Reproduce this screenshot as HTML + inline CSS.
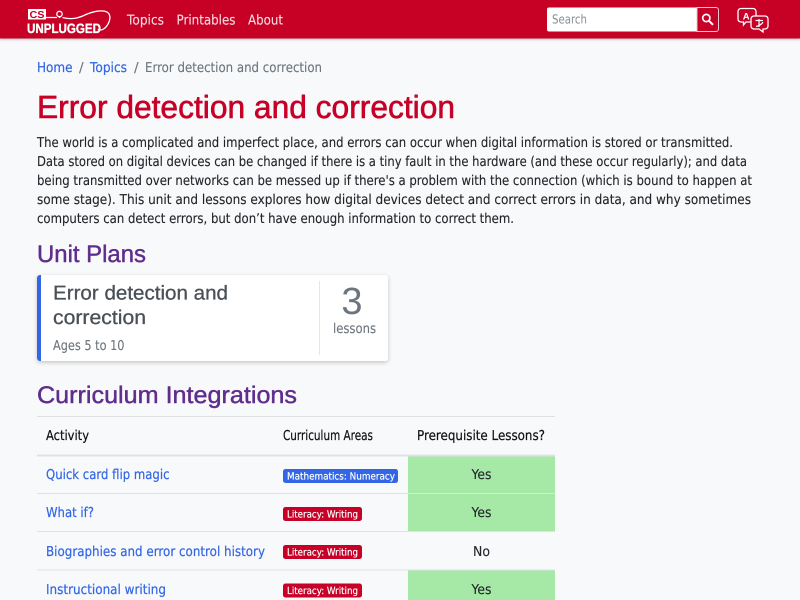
<!DOCTYPE html>
<html lang="en">
<head>
<meta charset="utf-8">
<title>Error detection and correction</title>
<style>
html,body{margin:0;padding:0;width:800px;height:600px;overflow:hidden;background:#f8f9fa}
svg{display:block;position:absolute;left:0;top:0}
text{text-rendering:geometricPrecision}
.b{font-family:"DejaVu Sans","Liberation Sans",sans-serif;font-size:13.6px;fill:#212529;stroke:#212529;stroke-width:.12}
.h{font-family:"Liberation Sans",sans-serif;stroke-linejoin:round}
.l{fill:#3366e6;stroke:#3366e6;stroke-width:.22}
.w{fill:#fff}
.g{fill:#6c757d;stroke:#6c757d}
.bd{font-family:"DejaVu Sans",sans-serif;font-size:9.8px;fill:#fff;stroke:#fff;stroke-width:.18}
.th{fill:#111;stroke:#111;stroke-width:.22}
.nav{fill:#f6dce2;stroke:#f6dce2;stroke-width:.1}
</style>
</head>
<body>
<svg width="800" height="600" viewBox="0 0 800 600" xmlns="http://www.w3.org/2000/svg">
<defs>
<filter id="s" x="-5%" y="-10%" width="110%" height="125%"><feDropShadow dx="0" dy="1.5" stdDeviation="2" flood-color="#000" flood-opacity=".22"/></filter>
<filter id="hs" x="-1%" y="-10%" width="102%" height="130%"><feDropShadow dx="0" dy="1" stdDeviation="1.2" flood-color="#000" flood-opacity=".25"/></filter>
</defs>

<!-- navbar -->
<rect width="800" height="38.5" fill="#c70028" filter="url(#hs)"/>
<rect x="28" y="9" width="18" height="10.500" fill="#fff"/>
<text x="29.500" y="18.200" class="h" font-size="10" font-weight="700" fill="#c70028" textLength="15" lengthAdjust="spacingAndGlyphs">CS</text>
<text x="27" y="33" class="h w" font-size="13.500" font-weight="700" stroke="#fff" stroke-width=".35" textLength="74" lengthAdjust="spacingAndGlyphs">UNPLUGGED</text>
<path d="M46 17.500H57M62.500 17.500C72 20 79 18 86 14.500C93 11.500 102 9.500 107 12C112 15 110 23 105 28C102 30.500 99 30.500 98 29" fill="none" stroke="#fff" stroke-width="1.300"/>
<circle cx="59.500" cy="14" r="2.700" fill="none" stroke="#fff" stroke-width="1.300"/>
<path d="M59.500 16.700V18" stroke="#fff" stroke-width="1.300"/>
<text x="127" y="24.600" class="b nav" textLength="37" lengthAdjust="spacingAndGlyphs">Topics</text>
<text x="176.500" y="24.600" class="b nav" textLength="59" lengthAdjust="spacingAndGlyphs">Printables</text>
<text x="248" y="24.600" class="b nav" textLength="35" lengthAdjust="spacingAndGlyphs">About</text>

<!-- search -->
<path d="M549 7.500H697V31.500H549a2 2 0 0 1-2-2V9.500a2 2 0 0 1 2-2z" fill="#fff"/>
<path d="M697 7.500H716a2.500 2.500 0 0 1 2.500 2.500V29a2.500 2.500 0 0 1-2.500 2.500H697z" fill="#c70028" stroke="#f2c4cd" stroke-width="1"/>
<text x="552" y="23.500" class="b" style="font-size:12.500px;fill:#868e96;stroke:none" textLength="35" lengthAdjust="spacingAndGlyphs">Search</text>
<circle cx="706.300" cy="18" r="3.600" fill="none" stroke="#fff" stroke-width="1.700"/>
<path d="M709 20.800L713 24.800" stroke="#fff" stroke-width="2"/>

<!-- language icon -->
<path d="M741 8.500H753a3 3 0 0 1 3 3V19a3 3 0 0 1-3 3H746L743.500 25V22H741a3 3 0 0 1-3-3V11.500a3 3 0 0 1 3-3z" fill="#c70028" stroke="#fff" stroke-width="1.300"/>
<text x="742.800" y="19.500" class="h w" font-size="9.500" font-weight="700">A</text>
<path d="M754 16H765a3 3 0 0 1 3 3V26a3 3 0 0 1-3 3H763V32L759 29H754a3 3 0 0 1-3-3V19a3 3 0 0 1 3-3z" fill="#c70028" stroke="#fff" stroke-width="1.300"/>
<path d="M755.500 20.500H763M759 19V27M756 26.500C759 26 762 24 763 22" fill="none" stroke="#fff" stroke-width="1.200"/>

<!-- breadcrumb -->
<text x="37" y="72" class="b l" textLength="35.500" lengthAdjust="spacingAndGlyphs">Home</text>
<text x="79" y="72" class="b g">/</text>
<text x="90" y="72" class="b l" textLength="37" lengthAdjust="spacingAndGlyphs">Topics</text>
<text x="134" y="72" class="b g">/</text>
<text x="145" y="72" class="b g" textLength="177" lengthAdjust="spacingAndGlyphs">Error detection and correction</text>

<!-- heading -->
<text x="37" y="118" class="h" font-size="32" fill="#c70028" stroke="#c70028" stroke-width=".6" textLength="418" lengthAdjust="spacingAndGlyphs">Error detection and correction</text>

<!-- intro -->
<text x="37" y="147" class="b" textLength="696" lengthAdjust="spacingAndGlyphs">The world is a complicated and imperfect place, and errors can occur when digital information is stored or transmitted.</text>
<text x="37" y="166" class="b" textLength="710" lengthAdjust="spacingAndGlyphs">Data stored on digital devices can be changed if there is a tiny fault in the hardware (and these occur regularly); and data</text>
<text x="37" y="185" class="b" textLength="715" lengthAdjust="spacingAndGlyphs">being transmitted over networks can be messed up if there's a problem with the connection (which is bound to happen at</text>
<text x="37" y="204" class="b" textLength="714" lengthAdjust="spacingAndGlyphs">some stage). This unit and lessons explores how digital devices detect and correct errors in data, and why sometimes</text>
<text x="37" y="223" class="b" textLength="477" lengthAdjust="spacingAndGlyphs">computers can detect errors, but don’t have enough information to correct them.</text>

<!-- unit plans -->
<text x="37" y="262" class="h" font-size="24" fill="#5f2d8c" stroke="#5f2d8c" stroke-width=".45" textLength="109" lengthAdjust="spacingAndGlyphs">Unit Plans</text>
<rect x="37" y="275" width="351" height="86" rx="3" fill="#fff" filter="url(#s)"/>
<path d="M41 275H40a3 3 0 0 0-3 3V358a3 3 0 0 0 3 3H41z" fill="#3366e6"/>
<text x="53" y="299.500" class="h" font-size="20" fill="#495057" stroke="#495057" stroke-width=".3" textLength="175" lengthAdjust="spacingAndGlyphs">Error detection and</text>
<text x="53" y="324" class="h" font-size="20" fill="#495057" stroke="#495057" stroke-width=".3" textLength="93" lengthAdjust="spacingAndGlyphs">correction</text>
<text x="53" y="350" class="b g" textLength="71.500" lengthAdjust="spacingAndGlyphs">Ages 5 to 10</text>
<rect x="319" y="281" width="1" height="74" fill="#e4e7ea"/>
<text x="352" y="314" class="h" font-size="38" fill="#6c757d" text-anchor="middle">3</text>
<text x="333" y="333" class="b g" textLength="43" lengthAdjust="spacingAndGlyphs">lessons</text>

<!-- curriculum integrations -->
<text x="37" y="403" class="h" font-size="24" fill="#5f2d8c" stroke="#5f2d8c" stroke-width=".45" textLength="260" lengthAdjust="spacingAndGlyphs">Curriculum Integrations</text>

<!-- table -->
<rect x="37" y="416" width="518" height="1" fill="#dee2e6"/>
<text x="46" y="440" class="b th" textLength="43" lengthAdjust="spacingAndGlyphs">Activity</text>
<text x="283" y="440" class="b th" textLength="90" lengthAdjust="spacingAndGlyphs">Curriculum Areas</text>
<text x="417" y="440" class="b th" textLength="128" lengthAdjust="spacingAndGlyphs">Prerequisite Lessons?</text>
<rect x="408" y="456" width="147" height="75" fill="#a6e9a6"/>
<rect x="408" y="570" width="147" height="30" fill="#a6e9a6"/>
<rect x="37" y="454.500" width="518" height="2" fill="#dee2e6"/>
<rect x="37" y="493" width="518" height="1" fill="#dee2e6"/>
<rect x="37" y="531" width="518" height="1" fill="#dee2e6"/>
<rect x="37" y="569.500" width="518" height="1" fill="#dee2e6"/>

<text x="46" y="479" class="b l" textLength="123.500" lengthAdjust="spacingAndGlyphs">Quick card flip magic</text>
<text x="46" y="517" class="b l" textLength="48" lengthAdjust="spacingAndGlyphs">What if?</text>
<text x="46" y="556" class="b l" textLength="219" lengthAdjust="spacingAndGlyphs">Biographies and error control history</text>
<text x="46" y="594" class="b l" textLength="120" lengthAdjust="spacingAndGlyphs">Instructional writing</text>

<rect x="283" y="469" width="115" height="14" rx="2.500" fill="#3366e6"/>
<text x="287" y="479.300" class="bd" textLength="108" lengthAdjust="spacingAndGlyphs">Mathematics: Numeracy</text>
<rect x="283" y="507" width="79" height="14" rx="2.500" fill="#c70028"/>
<text x="287" y="517.300" class="bd" textLength="71" lengthAdjust="spacingAndGlyphs">Literacy: Writing</text>
<rect x="283" y="545" width="79" height="14" rx="2.500" fill="#c70028"/>
<text x="287" y="555.300" class="bd" textLength="71" lengthAdjust="spacingAndGlyphs">Literacy: Writing</text>
<rect x="283" y="583.500" width="79" height="14" rx="2.500" fill="#c70028"/>
<text x="287" y="593.800" class="bd" textLength="71" lengthAdjust="spacingAndGlyphs">Literacy: Writing</text>

<text x="471.500" y="479" class="b" textLength="20" lengthAdjust="spacingAndGlyphs">Yes</text>
<text x="471.500" y="517" class="b" textLength="20" lengthAdjust="spacingAndGlyphs">Yes</text>
<text x="473" y="556" class="b" textLength="17" lengthAdjust="spacingAndGlyphs">No</text>
<text x="471.500" y="594" class="b" textLength="20" lengthAdjust="spacingAndGlyphs">Yes</text>
</svg>
</body>
</html>
